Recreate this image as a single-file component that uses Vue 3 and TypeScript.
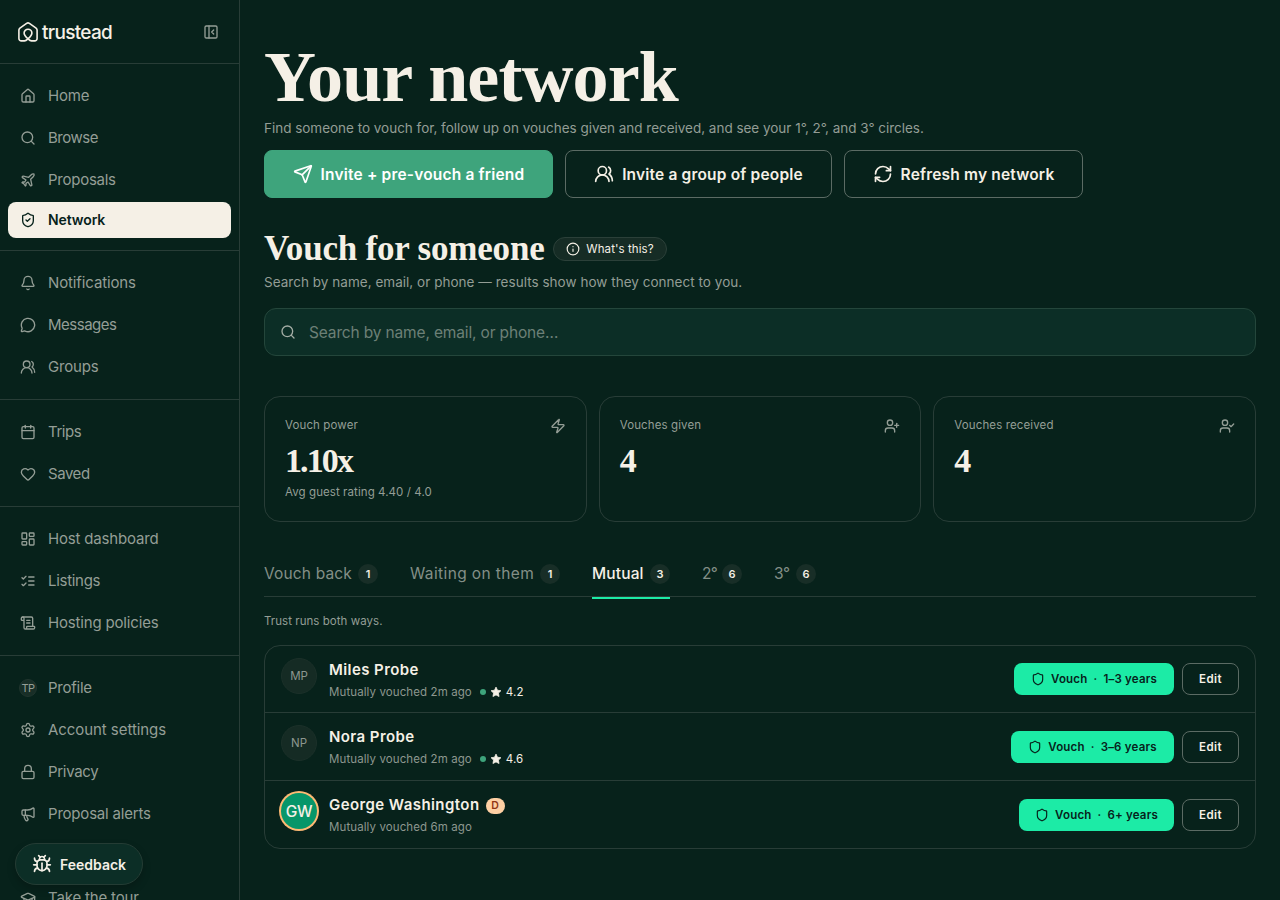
<script setup lang="ts">
type Shape = { tag: string; a: Record<string, string | number> }
const p = (...ds: string[]): Shape[] => ds.map((d) => ({ tag: 'path', a: { d } }))
const c = (cx: number, cy: number, r: number): Shape => ({ tag: 'circle', a: { cx, cy, r } })
const r = (x: number, y: number, width: number, height: number, rx: number): Shape => ({ tag: 'rect', a: { x, y, width, height, rx } })

const shield = 'M20 13c0 5-3.5 7.5-7.66 8.95a1 1 0 0 1-.67-.01C7.5 20.5 4 18 4 13V6a1 1 0 0 1 1-1c2 0 4.5-1.2 6.24-2.72a1.17 1.17 0 0 1 1.52 0C14.51 3.81 17 5 19 5a1 1 0 0 1 1 1z'
const torso = 'M16 21v-2a4 4 0 0 0-4-4H6a4 4 0 0 0-4 4v2'

const icons: Record<string, Shape[]> = {
  panel: [r(3, 3, 18, 18, 2), ...p('M9 3v18', 'm16 15-3-3 3-3')],
  home: p('M15 21v-8a1 1 0 0 0-1-1h-4a1 1 0 0 0-1 1v8', 'M3 10a2 2 0 0 1 .709-1.528l7-5.999a2 2 0 0 1 2.582 0l7 5.999A2 2 0 0 1 21 10v9a2 2 0 0 1-2 2H5a2 2 0 0 1-2-2z'),
  search: [c(11, 11, 8), ...p('m21 21-4.3-4.3')],
  plane: p('M17.8 19.2 16 11l3.5-3.5C21 6 21.5 4 21 3c-1-.5-3 0-4.5 1.5L13 8 4.8 6.2c-.5-.1-.9.1-1.1.5l-.3.5c-.2.5-.1 1 .3 1.3L9 12l-2 3H4l-1 1 3 2 2 3 1-1v-3l3-2 3.5 5.3c.3.4.8.5 1.3.3l.5-.2c.4-.3.6-.7.5-1.2z'),
  shieldCheck: p(shield, 'm9 12 2 2 4-4'),
  shield: p(shield),
  bell: p('M10.268 21a2 2 0 0 0 3.464 0', 'M3.262 15.326A1 1 0 0 0 4 17h16a1 1 0 0 0 .74-1.673C19.41 13.956 18 12.499 18 8A6 6 0 0 0 6 8c0 4.499-1.411 5.956-2.738 7.326'),
  message: p('M2.992 16.342a2 2 0 0 1 .094 1.167l-1.065 3.29a1 1 0 0 0 1.236 1.168l3.413-.998a2 2 0 0 1 1.099.092 10 10 0 1 0-4.777-4.719'),
  users: [...p('M18 21a8 8 0 0 0-16 0', 'M22 20c0-3.37-2-6.5-4-8a5 5 0 0 0-.45-8.3'), c(10, 8, 5)],
  calendar: [r(3, 4, 18, 18, 2), ...p('M8 2v4', 'M16 2v4', 'M3 10h18')],
  heart: p('M2 9.5a5.5 5.5 0 0 1 9.591-3.676.56.56 0 0 0 .818 0A5.49 5.49 0 0 1 22 9.5c0 2.29-1.5 4-3 5.5l-5.492 5.313a2 2 0 0 1-3 .019L5 15c-1.5-1.5-3-3.2-3-5.5'),
  dashboard: [r(3, 3, 7, 9, 1), r(14, 3, 7, 5, 1), r(14, 12, 7, 9, 1), r(3, 16, 7, 5, 1)],
  checks: p('m3 17 2 2 4-4', 'm3 7 2 2 4-4', 'M13 6h8', 'M13 12h8', 'M13 18h8'),
  scroll: p('M15 12h-5', 'M15 8h-5', 'M19 17V5a2 2 0 0 0-2-2H4', 'M8 21h12a2 2 0 0 0 2-2v-1a1 1 0 0 0-1-1H11a1 1 0 0 0-1 1v1a2 2 0 1 1-4 0V5a2 2 0 1 0-4 0v2a1 1 0 0 0 1 1h3'),
  settings: [...p('M9.671 4.136a2.34 2.34 0 0 1 4.659 0 2.34 2.34 0 0 0 3.319 1.915 2.34 2.34 0 0 1 2.33 4.033 2.34 2.34 0 0 0 0 3.831 2.34 2.34 0 0 1-2.33 4.033 2.34 2.34 0 0 0-3.319 1.915 2.34 2.34 0 0 1-4.659 0 2.34 2.34 0 0 0-3.32-1.915 2.34 2.34 0 0 1-2.33-4.033 2.34 2.34 0 0 0 0-3.831A2.34 2.34 0 0 1 6.35 6.051a2.34 2.34 0 0 0 3.319-1.915'), c(12, 12, 3)],
  lock: [r(3, 11, 18, 11, 2), ...p('M7 11V7a5 5 0 0 1 10 0v4')],
  megaphone: p('M11 6a13 13 0 0 0 8.4-2.8A1 1 0 0 1 21 4v12a1 1 0 0 1-1.6.8A13 13 0 0 0 11 14H5a2 2 0 0 1-2-2V8a2 2 0 0 1 2-2z', 'M6 14a12 12 0 0 0 2.4 7.2 2 2 0 0 0 3.2-2.4A8 8 0 0 1 10 14', 'M8 6v8'),
  cap: p('M21.42 10.922a1 1 0 0 0-.019-1.838L12.83 5.18a2 2 0 0 0-1.66 0L2.6 9.08a1 1 0 0 0 0 1.832l8.57 3.908a2 2 0 0 0 1.66 0z', 'M22 10v6', 'M6 12.5V16a6 3 0 0 0 12 0v-3.5'),
  bug: p('m8 2 1.88 1.88', 'M14.12 3.88 16 2', 'M9 7.13v-1a3.003 3.003 0 1 1 6 0v1', 'M12 20c-3.3 0-6-2.7-6-6v-3a4 4 0 0 1 4-4h4a4 4 0 0 1 4 4v3c0 3.3-2.7 6-6 6', 'M12 20v-9', 'M6.53 9C4.6 8.8 3 7.1 3 5', 'M6 13H2', 'M3 21c0-2.1 1.7-3.9 3.8-4', 'M20.97 5c0 2.1-1.6 3.8-3.5 4', 'M22 13h-4', 'M17.2 17c2.1.1 3.8 1.9 3.8 4'),
  send: p('M14.536 21.686a.5.5 0 0 0 .937-.024l6.5-19a.496.496 0 0 0-.635-.635l-19 6.5a.5.5 0 0 0-.024.937l7.93 3.18a2 2 0 0 1 1.112 1.11z', 'm21.854 2.147-10.94 10.939'),
  refresh: p('M3 12a9 9 0 0 1 9-9 9.75 9.75 0 0 1 6.74 2.74L21 8', 'M21 3v5h-5', 'M21 12a9 9 0 0 1-9 9 9.75 9.75 0 0 1-6.74-2.74L3 16', 'M8 16H3v5'),
  info: [c(12, 12, 10), ...p('M12 16v-4', 'M12 8h.01')],
  zap: p('M4 14a1 1 0 0 1-.78-1.63l9.9-10.2a.5.5 0 0 1 .86.46l-1.92 6.02A1 1 0 0 0 13 10h7a1 1 0 0 1 .78 1.63l-9.9 10.2a.5.5 0 0 1-.86-.46l1.92-6.02A1 1 0 0 0 11 14z'),
  userPlus: [...p(torso, 'M19 8v6', 'M22 11h-6'), c(9, 7, 4)],
  userCheck: [...p(torso, 'm16 11 2 2 4-4'), c(9, 7, 4)],
}

const groups = [
  [
    { label: 'Home', icon: 'home', ls: -0.2 },
    { label: 'Browse', icon: 'search', ls: -0.5 },
    { label: 'Proposals', icon: 'plane', ls: -0.25 },
    { label: 'Network', icon: 'shieldCheck', ls: -0.1, active: true },
  ],
  [
    { label: 'Notifications', icon: 'bell', ls: -0.12 },
    { label: 'Messages', icon: 'message', ls: -0.5 },
    { label: 'Groups', icon: 'users', ls: -0.2 },
  ],
  [
    { label: 'Trips', icon: 'calendar', ls: -0.45 },
    { label: 'Saved', icon: 'heart', ls: -0.45 },
  ],
  [
    { label: 'Host dashboard', icon: 'dashboard', ls: -0.17 },
    { label: 'Listings', icon: 'checks', ls: -0.3 },
    { label: 'Hosting policies', icon: 'scroll', ls: -0.17 },
  ],
  [
    { label: 'Profile', icon: '', ls: -0.25 },
    { label: 'Account settings', icon: 'settings', ls: -0.06 },
    { label: 'Privacy', icon: 'lock', ls: -0.3 },
    { label: 'Proposal alerts', icon: 'megaphone', ls: -0.2 },
    { label: 'Take the tour', icon: 'cap', ls: -0.17, apart: true },
  ],
] as { label: string; icon: string; ls: number; active?: boolean; apart?: boolean }[][]

const actions = [
  { label: 'Invite + pre-vouch a friend', icon: 'send', width: 289, primary: true },
  { label: 'Invite a group of people', icon: 'users', width: 267, primary: false },
  { label: 'Refresh my network', icon: 'refresh', width: 239, primary: false },
]

const stats = [
  { label: 'Vouch power', value: '1.10x', note: 'Avg guest rating 4.40 / 4.0', icon: 'zap' },
  { label: 'Vouches given', value: '4', note: '', icon: 'userPlus' },
  { label: 'Vouches received', value: '4', note: '', icon: 'userCheck' },
]

const tabs = [
  { label: 'Vouch back', count: 1, width: 114, ls: 0.15 },
  { label: 'Waiting on them', count: 1, width: 150, ls: 0.38 },
  { label: 'Mutual', count: 3, width: 78, ls: 0.15, active: true },
  { label: '2°', count: 6, width: 40, ls: -0.8 },
  { label: '3°', count: 6, width: 42, ls: -0.3 },
]

const people = [
  { initials: 'MP', name: 'Miles Probe', when: '2m', rating: '4.2', term: '1–3 years', width: 160 },
  { initials: 'NP', name: 'Nora Probe', when: '2m', rating: '4.6', term: '3–6 years', width: 163 },
  { initials: 'GW', name: 'George Washington', when: '6m', rating: '', term: '6+ years', width: 155, badge: 'D' },
]
</script>

<template>
  <div class="app">
    <aside class="sidebar">
      <header class="brand">
        <svg class="mark" viewBox="0 0 20 20">
          <path d="M7.2 18.9H3.3a2.4 2.4 0 0 1-2.4-2.4V8.1c0-.8.4-1.5 1-2L8.6 1.4a2.4 2.4 0 0 1 2.8 0l6.7 4.7c.6.5 1 1.2 1 2v8.4a2.4 2.4 0 0 1-2.4 2.4h-3.2c-1.2 0-2-.6-3.5-2-2.6-2.2-3.9-3.5-3.9-5.8a3.9 3.9 0 0 1 7.8 0c0 2.3-1.3 3.6-3.9 5.8-1.5 1.4-2.3 2-3.5 2" />
        </svg>
        <span class="wordmark">trustead</span>
        <svg class="ico s16 collapse" viewBox="0 0 24 24"><component :is="s.tag" v-for="(s, i) in icons.panel" :key="i" v-bind="s.a" /></svg>
      </header>
      <nav v-for="(g, gi) in groups" :key="gi" class="group">
        <a v-for="n in g" :key="n.label" class="item" :class="{ active: n.active, apart: n.apart }">
          <span v-if="!n.icon" class="mini">TP</span>
          <svg v-else class="ico s16" viewBox="0 0 24 24"><component :is="s.tag" v-for="(s, i) in icons[n.icon]" :key="i" v-bind="s.a" /></svg>
          <span class="label" :style="{ letterSpacing: n.ls + 'px' }">{{ n.label }}</span>
        </a>
      </nav>
    </aside>

    <main class="main">
      <h1>Your network</h1>
      <p class="lead first">Find someone to vouch for, follow up on vouches given and received, and see your 1°, 2°, and 3° circles.</p>
      <div class="actions">
        <button v-for="a in actions" :key="a.label" class="action" :class="{ primary: a.primary }" :style="{ width: a.width + 'px' }">
          <svg class="ico s20" viewBox="0 0 24 24"><component :is="s.tag" v-for="(s, i) in icons[a.icon]" :key="i" v-bind="s.a" /></svg>
          <span>{{ a.label }}</span>
        </button>
      </div>

      <div class="heading">
        <h2>Vouch for someone</h2>
        <button class="hint">
          <svg class="ico s14" viewBox="0 0 24 24"><component :is="s.tag" v-for="(s, i) in icons.info" :key="i" v-bind="s.a" /></svg>
          <span>What's this?</span>
        </button>
      </div>
      <p class="lead second">Search by name, email, or phone — results show how they connect to you.</p>
      <div class="search">
        <svg class="ico s16" viewBox="0 0 24 24"><component :is="s.tag" v-for="(s, i) in icons.search" :key="i" v-bind="s.a" /></svg>
        <span>Search by name, email, or phone…</span>
      </div>

      <div class="stats">
        <section v-for="s in stats" :key="s.label" class="stat">
          <div class="stat-top">
            <span>{{ s.label }}</span>
            <svg class="ico s16" viewBox="0 0 24 24"><component :is="k.tag" v-for="(k, i) in icons[s.icon]" :key="i" v-bind="k.a" /></svg>
          </div>
          <strong>{{ s.value }}</strong>
          <small v-if="s.note">{{ s.note }}</small>
        </section>
      </div>

      <div class="tabs">
        <div v-for="t in tabs" :key="t.label" class="tab" :class="{ on: t.active }" :style="{ width: t.width + 'px' }">
          <span class="label" :style="{ letterSpacing: t.ls + 'px' }">{{ t.label }}</span><b>{{ t.count }}</b>
        </div>
      </div>
      <p class="caption">Trust runs both ways.</p>

      <div class="list">
        <article v-for="m in people" :key="m.name" class="row">
          <span class="avatar" :class="{ ringed: m.badge }">{{ m.initials }}</span>
          <div class="who">
            <div class="name"><span>{{ m.name }}</span><i v-if="m.badge">{{ m.badge }}</i></div>
            <div class="meta">
              <span>Mutually vouched {{ m.when }} ago</span>
              <template v-if="m.rating">
                <span class="dot"></span>
                <svg class="star" viewBox="0 0 24 24"><path d="M12 2.2l3 6.3 6.9.9-5 4.800 1.200 6.900-6.100-3.300-6.100 3.300 1.200-6.900-5-4.800 6.900-.9z" /></svg>
                <span class="score">{{ m.rating }}</span>
              </template>
            </div>
          </div>
          <div class="ops">
            <button class="vouch" :style="{ width: m.width + 'px' }">
              <svg class="ico s14" viewBox="0 0 24 24"><component :is="s.tag" v-for="(s, i) in icons.shield" :key="i" v-bind="s.a" /></svg>
              <span>Vouch</span><span>·</span><span>{{ m.term }}</span>
            </button>
            <button class="edit">Edit</button>
          </div>
        </article>
      </div>
    </main>

    <button class="feedback">
      <svg class="ico s20" viewBox="0 0 24 24"><component :is="s.tag" v-for="(s, i) in icons.bug" :key="i" v-bind="s.a" /></svg>
      <span>Feedback</span>
    </button>
  </div>
</template>

<style>
body { margin: 0; background: #07221b; overflow: hidden; }
</style>

<style scoped>
* { box-sizing: border-box; }
.app { position: relative; display: flex; width: 1280px; height: 900px; overflow: hidden; background: #07221b; color: #f5f0e6; font-family: Inter, "Liberation Sans", sans-serif; }
button { font-family: inherit; color: inherit; margin: 0; padding: 0; background: none; display: flex; align-items: center; justify-content: center; white-space: nowrap; }
p, h1, h2 { margin: 0; }
.ico { fill: none; stroke: currentColor; stroke-width: 2; stroke-linecap: round; stroke-linejoin: round; flex: none; }
.s14 { width: 14px; height: 14px; }
.s16 { width: 16px; height: 16px; }
.s20 { width: 20px; height: 20px; }

.sidebar { width: 240px; flex: none; border-right: 1px solid #283d37; color: #949e96; }
.brand { height: 64px; padding: 0 20px 0 18px; display: flex; align-items: center; border-bottom: 1px solid #283d37; }
.mark { width: 20px; height: 20px; fill: none; stroke: #f5f0e6; stroke-width: 1.6; stroke-linejoin: round; overflow: visible; }
.wordmark { margin-left: 4px; font-size: 19px; font-weight: 500; letter-spacing: -0.7px; color: #f5f0e6; flex: 1; line-height: 24px; padding-top: 2px; }
.group { padding: 12px 8px; display: flex; flex-direction: column; gap: 2px; border-bottom: 1px solid #283d37; }
.item { height: 40px; flex: none; padding-left: 12px; display: flex; align-items: center; gap: 12px; font-size: 15px; white-space: nowrap; }
.item .label, .tab .label { padding-bottom: 2px; }
.item.active { height: 36px; border-radius: 8px; background: #f5f0e6; color: #07221b; font-size: 14px; font-weight: 600; }
.item.apart { margin-top: 42px; }
.mini { width: 18px; height: 18px; margin: 0 -1px; border-radius: 50%; background: #182e27; border: 1px solid #20352e; font-size: 11px; letter-spacing: -0.6px; display: flex; align-items: center; justify-content: center; }

.main { flex: 1; padding: 36px 24px 0; }
h1 { height: 82px; line-height: 82px; font: 700 72px/82px "Liberation Serif", serif; letter-spacing: -0.9px; white-space: nowrap; }
.lead { font-size: 13.5px; line-height: 20px; color: #939d95; white-space: nowrap; }
.first { letter-spacing: -0.02px; }
.actions { margin-top: 12px; display: flex; gap: 12px; }
.action { height: 48px; gap: 8px; border: 1px solid #5b6b64; border-radius: 8px; font-size: 15.5px; font-weight: 600; letter-spacing: 0.18px; }
.action.primary { background: #3ea47c; border-color: #3ea47c; color: #fff; }
.heading { margin-top: 32px; height: 38px; display: flex; align-items: center; gap: 9px; }
h2 { width: 280px; font: 700 35px/38px "Liberation Serif", serif; white-space: nowrap; letter-spacing: -0.2px; }
.hint { width: 114px; height: 24px; gap: 6px; border: 1px solid #2b4039; border-radius: 12px; background: #162c25; font-size: 11.5px; letter-spacing: 0.08px; }
.second { margin-top: 4px; letter-spacing: 0.03px; }
.search { margin-top: 16px; height: 48px; padding-left: 15px; display: flex; align-items: center; gap: 13px; border: 1px solid #24463b; border-radius: 12px; background: #0c2e26; font-size: 15.5px; letter-spacing: -0.15px; color: #6c8077; }
.search .ico { color: #a4ada5; }

.stats { margin-top: 40px; display: grid; grid-template-columns: repeat(3, 1fr); gap: 12px; }
.stat { height: 126px; padding: 20px; border: 1px solid #283d37; border-radius: 16px; display: flex; flex-direction: column; }
.stat-top { height: 16px; display: flex; justify-content: space-between; font-size: 11.5px; letter-spacing: 0.12px; line-height: 16px; color: #949e96; }
.stat-top .ico { margin-top: 1px; }
.stat strong { margin-top: 8px; font: 700 34px/40px "Liberation Serif", serif; letter-spacing: -1.9px; }
.stat small { margin-top: 3px; font-size: 11.5px; letter-spacing: 0.08px; line-height: 16px; color: #949e96; }

.tabs { margin-top: 40px; height: 35px; display: flex; gap: 32px; border-bottom: 1px solid #283d37; }
.tab { height: 37px; padding-bottom: 11px; display: flex; justify-content: space-between; align-items: center; font-size: 15.5px; color: #838f87; border-bottom: 2px solid transparent; white-space: nowrap; }
.tab.on { color: #f5f0e6; font-weight: 500; border-color: #1ceba6; }
.tab b { width: 20px; height: 20px; border-radius: 50%; background: #182e27; color: #f5f0e6; font-size: 11px; font-weight: 600; line-height: 20px; text-align: center; }
.caption { margin-top: 16px; font-size: 11.5px; letter-spacing: 0.05px; line-height: 16px; color: #949e96; }

.list { margin-top: 16px; height: 204px; border: 1px solid #283d37; border-radius: 16px; display: grid; grid-template-rows: 67px 68px 67px; }
.row { display: flex; padding: 0 16px; }
.row:not(:last-child) { border-bottom: 1px solid #283d37; }
.avatar { width: 36px; height: 36px; margin-top: 12px; border-radius: 50%; background: #152b24; border: 1px solid #1b3029; color: #8d978f; font-size: 11.5px; display: flex; align-items: center; justify-content: center; }
.avatar.ringed { background: #079669; border: 0; color: #f5f0e6; font-size: 15.5px; font-weight: 500; letter-spacing: -0.4px; box-shadow: 0 0 0 2px #fdba74; }
.who { margin-left: 12px; padding-top: 12px; flex: 1; }
.name { height: 24px; display: flex; align-items: center; gap: 6px; font-size: 15px; font-weight: 600; letter-spacing: 0.42px; line-height: 24px; }
.name i { width: 19px; height: 16px; margin-top: 2px; border-radius: 8px; background: #fed0a4; color: #8f3514; font: 600 10.5px/16px Inter, sans-serif; letter-spacing: 0; text-align: center; }
.meta { margin-top: 2px; height: 16px; display: flex; align-items: center; font-size: 11.5px; letter-spacing: 0.1px; color: #8d978f; }
.dot { width: 6px; height: 6px; margin: 0 4px 0 8px; border-radius: 50%; background: #3ea47c; }
.star { width: 12px; height: 12px; fill: #f5f0e6; stroke: #f5f0e6; stroke-width: 1.5; stroke-linejoin: round; margin-right: 4px; }
.score { color: #f5f0e6; }
.ops { display: flex; align-items: center; gap: 8px; }
.vouch { height: 32px; gap: 6px; border: 0; border-radius: 8px; background: #1ceba6; color: #07221b; font-size: 11.5px; font-weight: 600; letter-spacing: 0.2px; }
.edit { width: 57px; height: 32px; border: 1px solid #5b6b64; border-radius: 8px; font-size: 11.5px; font-weight: 600; letter-spacing: 0.4px; }

.feedback { position: absolute; left: 15px; top: 843px; width: 128px; height: 42px; gap: 8px; border: 1px solid #243c34; border-radius: 21px; background: #0c2e26; font-size: 14px; font-weight: 600; box-shadow: 0 4px 8px rgba(0, 0, 0, 0.2); }
</style>
